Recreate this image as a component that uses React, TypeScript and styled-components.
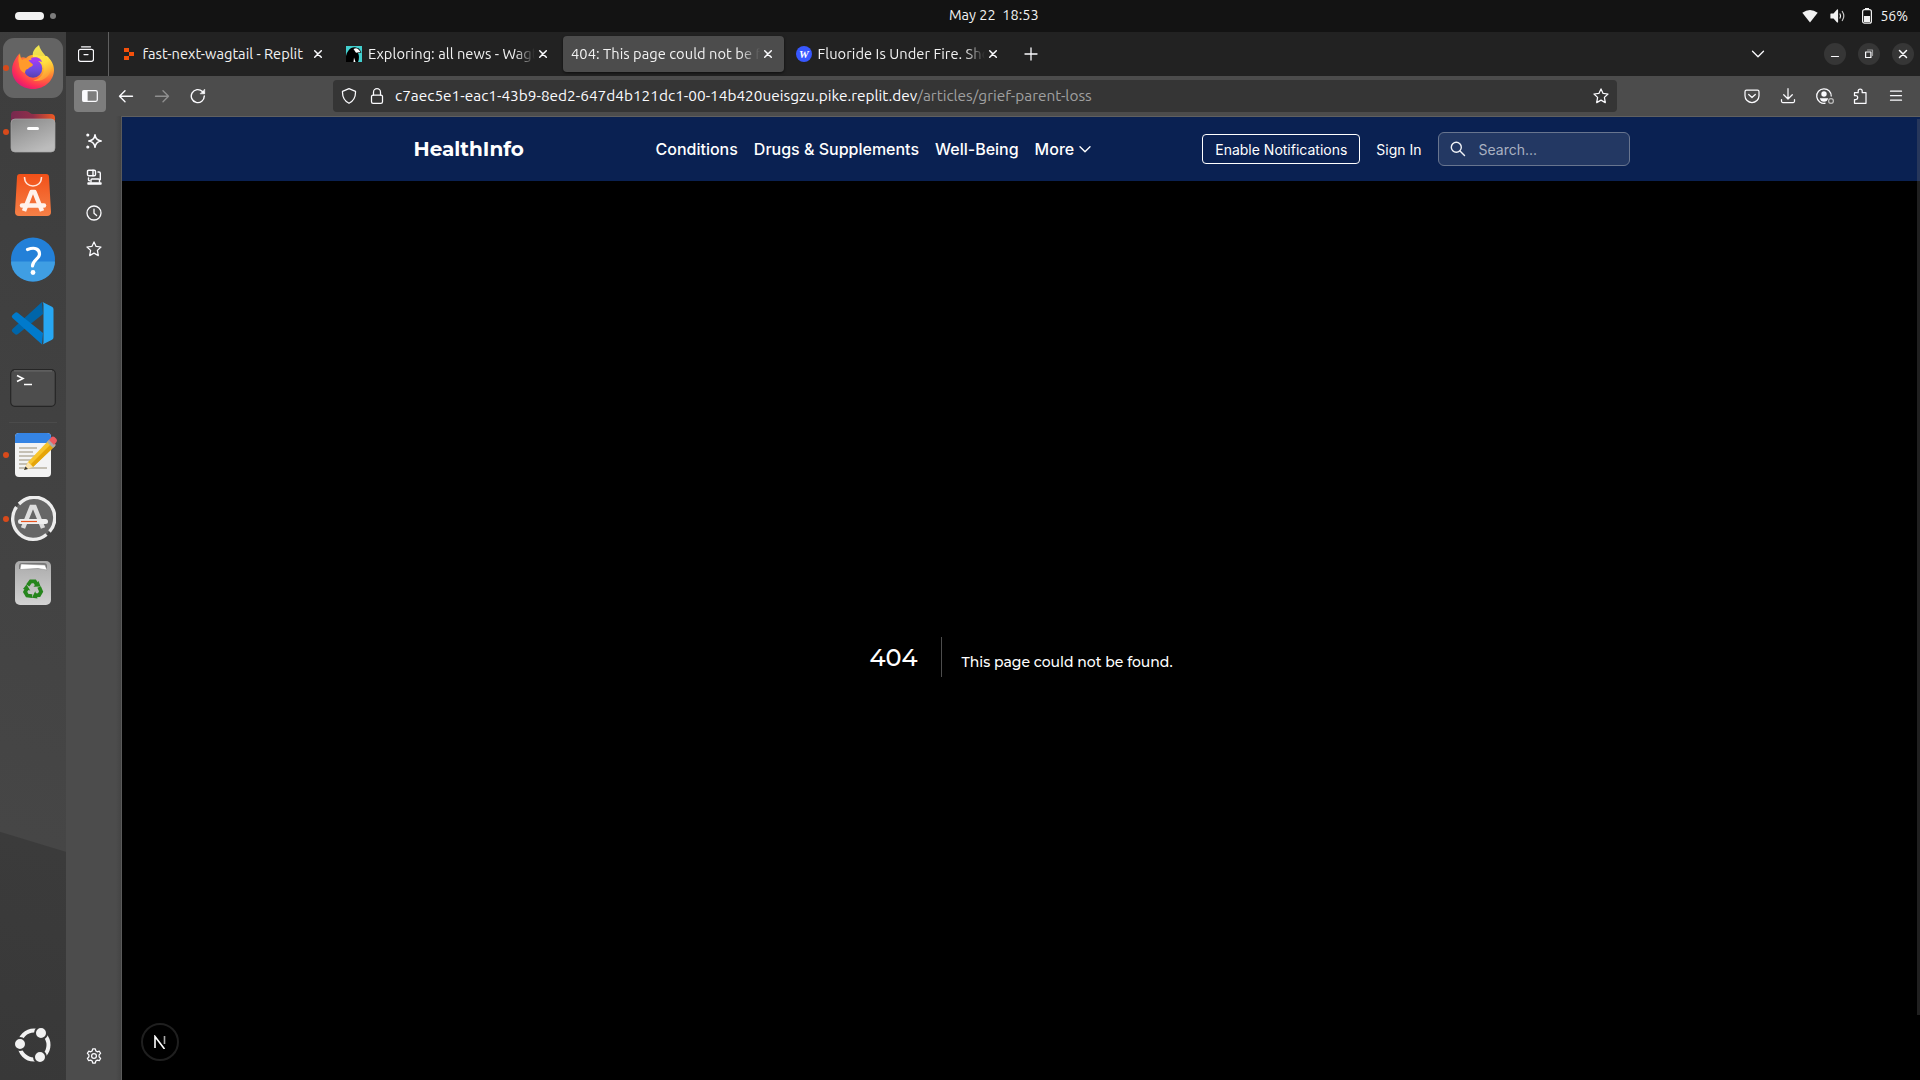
import React from "react";
import styled, { createGlobalStyle } from "styled-components";

const UI = `Ubuntu, "Noto Sans", "Open Sans", sans-serif`;
const INTER = `Inter, "Liberation Sans", sans-serif`;
const GEO = `Montserrat, Inter, sans-serif`;

const Global = createGlobalStyle`
  * { box-sizing: border-box; }
  html, body { margin: 0; padding: 0; background: #000; overflow: hidden; }
`;

const Desktop = styled.div`
  width: 1920px; height: 1080px; display: flex; flex-direction: column;
  font-family: ${UI}; color: #f2f2f2; overflow: hidden;
`;
const TopBar = styled.header`
  height: 32px; flex: none; background: #131313; display: grid;
  grid-template-columns: 949px 90px 1fr; align-items: center;
`;
const Workspaces = styled.div`
  display: flex; align-items: center; gap: 6px; padding-left: 15px;
`;
const Pill = styled.span`width: 29px; height: 8px; border-radius: 4px; background: #f2f2f2;`;
const Dot = styled.span`width: 6px; height: 6px; border-radius: 3px; background: #7d7d7d;`;
const Text = styled.span<{ $size?: number; $track?: number; $color?: string; $weight?: number }>`
  font-size: ${p => p.$size ?? 14.67}px; letter-spacing: ${p => p.$track ?? 0}px;
  color: ${p => p.$color ?? "#f2f2f2"}; font-weight: ${p => p.$weight ?? 400};
  white-space: pre; line-height: 20px;
`;
const Clock = styled(Text)`padding-bottom: 2px;`;
const Tray = styled.div`
  display: flex; align-items: center; justify-content: flex-end; padding-right: 12px;
`;
const TrayIcon = styled.span<{ $gap: number }>`display: flex; margin-right: ${p => p.$gap}px;`;

const Body = styled.div`flex: 1; display: flex; min-height: 0;`;
const Dock = styled.nav`
  width: 66px; flex: none; display: flex; flex-direction: column; justify-content: space-between;
  background: linear-gradient(16.9deg, #383838 0, #3b3b3b 237px, #464646 238px, #3e3e3e 900px, #3d3d3d 100%);
`;
const DockGroup = styled.div`display: flex; flex-direction: column;`;
const DockItem = styled.div<{ $active?: boolean }>`
  width: 60px; height: 60px; margin: 0 3px 4px; border-radius: 11px; position: relative;
  background: ${p => (p.$active ? "#646464" : "transparent")};
  display: flex; align-items: center; justify-content: center;
`;
const DockTop = styled(DockGroup)`padding-top: 6px;`;
const DockRule = styled.div`height: 1px; width: 48px; margin: 0 auto 2px; background: #4b4b4b;`;
const Running = styled.i`
  position: absolute; left: 0; top: 27px; width: 6px; height: 6px; border-radius: 3px; background: #d84a1b;
`;

const Browser = styled.main`flex: 1; display: flex; flex-direction: column; min-width: 0; background: #4c4c4c;`;
const TabStrip = styled.div`
  height: 44px; flex: none; background: #222; display: flex; align-items: center;
`;
const ViewButton = styled.div`
  width: 43px; height: 44px; border-right: 1px solid #606060; display: flex; align-items: center; padding-left: 12px;
`;
const Tab = styled.div<{ $selected?: boolean; $w: number; $pad: number }>`
  width: ${p => p.$w}px; height: 36px; border-radius: 4px; display: flex; align-items: center;
  padding: 0 8px 0 ${p => p.$pad}px; background: ${p => (p.$selected ? "#4c4c4c" : "transparent")};
  box-shadow: ${p => (p.$selected ? "0 1px 3px rgba(0,0,0,.6)" : "none")};
`;
const TabTitle = styled.div<{ $fade?: boolean; $left: number }>`
  flex: 1; min-width: 0; margin-left: ${p => p.$left}px; display: flex;
  mask-image: ${p => (p.$fade ? "linear-gradient(to left, transparent 0, #000 20px)" : "none")};
`;
const Tabs = styled.div`display: flex; padding-left: 7px; gap: 4px;`;
const NewTab = styled.div`display: flex; padding-left: 13.5px;`;
const WindowTools = styled.div`margin-left: auto; display: flex; align-items: center; padding-right: 6px;`;
const ListTabs = styled.span`display: flex; margin-right: 58px;`;
const WinButtons = styled.div`display: flex; gap: 12px;`;
const WinButton = styled.span`
  width: 22px; height: 22px; border-radius: 11px; background: #363636; display: flex; align-items: center; justify-content: center;
`;
const NavBar = styled.div`
  height: 40px; flex: none; display: flex; align-items: center; background: #4c4c4c; padding-left: 8px;
`;
const SideToggle = styled.span`
  width: 32px; height: 32px; border-radius: 4px; background: #7d7d7d; display: flex; align-items: center; justify-content: center;
`;
const NavButtons = styled.div`display: flex; gap: 20px; padding-left: 12px;`;
const UrlBar = styled.div`
  width: 1284px; height: 32px; margin-left: 127px; border-radius: 4px; background: #353535; display: flex; align-items: center; padding: 0 8px;
`;
const UrlIcons = styled.div`display: flex; gap: 12px; margin-right: 10px;`;
const UrlText = styled.div`flex: 1; display: flex;`;
const NavTools = styled.div`margin-left: auto; display: flex; gap: 20px; padding-right: 16px; align-items: center;`;
const Content = styled.div`flex: 1; display: flex; min-height: 0;`;
const Sidebar = styled.aside`
  width: 56px; flex: none; display: flex; flex-direction: column; justify-content: space-between; align-items: center;
  padding: 17px 0 16px; border-right: 1px solid #5a5a5a;
  background: linear-gradient(to left, #444 0, #4c4c4c 5px);
`;
const SideGroup = styled.div`display: flex; flex-direction: column; gap: 20px;`;
const Page = styled.section`
  flex: 1; background: #000; border-top: 1px solid #606060; display: flex; flex-direction: column; position: relative;
`;
const SiteHeader = styled.div`
  height: 64px; flex: none; background: #0a2152; display: flex; align-items: center; padding: 0 290px 0 291.5px;
`;
const Brand = styled.div`font: 700 20px/28px ${GEO}; color: #fff; width: 242px; white-space: nowrap;`;
const Menu = styled.div`display: flex; gap: 16px; font: 500 16px/24px ${INTER}; color: #fff; white-space: nowrap;`;
const MenuMore = styled.span`display: flex; align-items: center; gap: 3px;`;
const Actions = styled.div`margin-left: auto; display: flex; align-items: center; gap: 16px; font: 400 14px/20px ${INTER}; color: #fff;`;
const Enable = styled.button`
  width: 158px; height: 30px; padding: 1px 0 0; border: 1px solid #fff; border-radius: 4px; background: none; color: #fff;
  font: 400 14px/20px ${INTER}; white-space: nowrap;
`;
const SignIn = styled.span`padding-top: 1px; margin-right: .5px;`;
const Search = styled.div`
  width: 192px; height: 34px; border: 1px solid #68758f; border-radius: 6px; background: #233863; display: flex;
  align-items: center; padding: 0 0 0 11px; gap: 12.5px; color: #a9b1c1;
`;
const Placeholder = styled.span`padding-top: 1px;`;
const NotFound = styled.div`flex: 1; display: flex; justify-content: center; padding: 456px 0 0 0; color: #fff;`;
const Code = styled.h1`
  margin: 0 20px 0 0; padding: 0 23px 0 0; height: 40px; border-right: 1px solid #4d4d4d; font: 500 24px/41px ${GEO};
`;
const Message = styled.h2`margin: 0; font: 500 14px/50px ${GEO};`;
const NextBadge = styled.div`
  position: absolute; left: 19px; bottom: 19px; width: 38px; height: 38px; border-radius: 19px; border: 2px solid #1f1f1f;
  background: #000; display: flex; align-items: center; justify-content: center;
`;
const ScrollThumb = styled.div`
  position: absolute; right: 0; top: 2px; width: 3px; height: 896px; background: rgba(115,115,115,.28);
`;

const Line = ({ size = 16, color = "#fbfbfe", w = 1.25, children }: any) => (
  <svg width={size} height={size} viewBox="0 0 16 16" fill="none" stroke={color} strokeWidth={w} strokeLinecap="round" strokeLinejoin="round">{children}</svg>
);
const Close = () => <Line w={1.5}><path d="M4.7 4.7l6.6 6.6M11.3 4.7l-6.6 6.6" /></Line>;
const Star = () => <Line><path d="M8 .9l2.1 4.5 4.9.6-3.6 3.4.9 5.2L8 12.1l-4.3 2.5.9-5.2L1 6l4.900-.6z" /></Line>;

const Firefox = () => (
  <svg width="44" height="46" viewBox="0 0 44 46">
    <defs>
      <radialGradient id="ffa" cx=".8" cy=".15" r="1"><stop offset="0" stopColor="#fff44f" /><stop offset=".3" stopColor="#ffb52e" /><stop offset=".55" stopColor="#ff7139" /><stop offset=".8" stopColor="#ff2f55" /><stop offset="1" stopColor="#d9157c" /></radialGradient>
      <linearGradient id="ffb" x1="0" y1="0" x2="0" y2="1"><stop offset="0" stopColor="#a33bf7" /><stop offset=".6" stopColor="#6a4bdc" /><stop offset="1" stopColor="#553fae" /></linearGradient>
      <linearGradient id="ffc" x1=".5" y1="0" x2=".8" y2="1"><stop offset="0" stopColor="#fff44f" /><stop offset=".5" stopColor="#ffdc3e" /><stop offset="1" stopColor="#ff8a33" /></linearGradient>
    </defs>
    <path d="M8 9c0 2 0 3 1 4 2-1 4-1 6 0 4-4 9-4 14-2l7 0c4 4 7 8 7 14 0 10-9 19-21 19S1 35 1 25c0-5 2-9 4-12 1-2 2-3 3-4z" fill="url(#ffa)" />
    <path d="M28 0c-5 4-7 7-6 12 6 0 10 4 11 9 1 8-4 13-11 15 12 1 18-6 18-14 0-5-2-8-3-10v4C36 10 30 8 28 0z" fill="url(#ffc)" opacity=".9" />
    <circle cx="22" cy="23.500" r="9.300" fill="url(#ffb)" />
    <path d="M20 13c5-2 10 0 11 4-4-2-7-1-9 1z" fill="#a63bf0" />
    <path d="M9 8c0 3 1 5 2 7 3-2 6-1 8 2 1 1 3 2 3 3-1 2-4 2-5 4-2 0-3 2-3 4-4-1-6-5-6-9-1-4-1-8 1-11z" fill="#ff9a2b" />
  </svg>
);
const Files = () => (
  <svg width="46" height="44" viewBox="0 0 46 44">
    <defs><linearGradient id="fa"><stop offset="0" stopColor="#77294f" /><stop offset=".5" stopColor="#8f2f4a" /><stop offset="1" stopColor="#f05a22" /></linearGradient>
      <linearGradient id="fb" x2=".6" y2="1"><stop offset="0" stopColor="#868686" /><stop offset="1" stopColor="#bcbcbc" /></linearGradient></defs>
    <path d="M1 20V5q0-4 4-4h11q2 0 3.500 1.500T23 4h18q4 0 4 4v12z" fill="url(#fa)" />
    <rect x="1" y="9" width="44" height="33" rx="4" fill="url(#fb)" stroke="#a7a7a7" strokeWidth=".7" />
    <rect x="17" y="17" width="12" height="3" rx="1.5" fill="#fff" />
  </svg>
);
const AppCenter = () => (
  <svg width="36" height="44" viewBox="0 0 36 44">
    <defs><linearGradient id="ac" x2="0" y2="1"><stop offset="0" stopColor="#f25018" /><stop offset="1" stopColor="#f58047" /></linearGradient></defs>
    <path d="M5 0h26q3 0 3 3l2 35q0 4-4 4H4q-4 0-4-4L2 3q0-3 3-3z" fill="url(#ac)" />
    <path d="M9.500 3c0 6 4 9 8.500 9s8.500-3 8.500-9" fill="none" stroke="#ffe5da" strokeWidth="1.500" />
    <path d="M9 37l7.500-19h3L27 37" fill="none" stroke="#fff2ec" strokeWidth="4.500" strokeLinejoin="round" />
    <path d="M7 31.500h22" stroke="#fff2ec" strokeWidth="4.500" strokeLinecap="round" />
  </svg>
);
const Help = () => (
  <svg width="46" height="46" viewBox="0 0 46 46">
    <circle cx="23" cy="22.500" r="22" fill="#2380d8" /><path d="M1 24.500a22 20 0 0044 0z" fill="#3f9ee3" />
    <path d="M17.500 12.500c8-3 12 0 12 4.500 0 5-7 6-7 12" fill="none" stroke="#fff" strokeWidth="3.200" strokeLinecap="round" /><circle cx="23" cy="35.500" r="2.400" fill="#fff" />
  </svg>
);
const Code2 = () => (
  <svg width="44" height="44" viewBox="0 0 44 44">
    <path d="M31 0L1.500 27Q0 28.500 1.500 30L4.500 32.600Q6 33 7 32L32 12z" fill="#0065a9" />
    <path d="M31 42.500L1.500 16Q0 14.500 1.500 13L4.500 10.400Q6 10 7 11L32 31z" fill="#007acc" />
    <path d="M31.500 0l9.500 4.800q1.500.8 1.500 2.500v27.900q0 1.700-1.500 2.500l-9.500 4.800Q32.500 41.500 32.500 40V3q0-2-1-3z" fill="#27a7f3" />
  </svg>
);
const Terminal = () => (
  <svg width="46" height="38" viewBox="0 0 46 38">
    <rect x=".7" y=".7" width="44.600" height="36.600" rx="4" fill="#4d4d4d" stroke="#262626" strokeWidth="1.200" /><path d="M4 1.900h38" stroke="#707070" />
    <path d="M7 6.500l6 3-6 3M14 15.500h8" fill="none" stroke="#fff" strokeWidth="1.600" />
  </svg>
);
const Editor = () => (
  <svg width="46" height="46" viewBox="0 0 46 46" overflow="visible">
    <rect x="5" y="1" width="36" height="44" rx="4" fill="#f3f3f3" /><path d="M5 11V5q0-4 4-4h28q4 0 4 4v6z" fill="#3584e4" />
    <path d="M9 16h18M9 20h14M9 24h16M9 28h13M9 32h10M9 36h28" stroke="#c5c0b4" strokeWidth="1.800" />
    <g transform="translate(1 -1)">
      <path d="M17 31L38 9l6 6-22 21-9 3z" fill="#f8c52d" /><path d="M20 33l21-21 3 3-22 21z" fill="#e5a50a" />
      <path d="M17 31l5 5-9 3z" fill="#fbe3b0" /><path d="M14.500 35.500l2.500 2.500-4 1z" fill="#333" />
      <path d="M36 11l3-3 6 6-3 3z" fill="#aaa" /><path d="M38 9l2.500-3q1.500-1 3 0l2 2q1 1.500 0 3L43 14z" fill="#ed5b60" />
    </g>
  </svg>
);
const Updater = () => (
  <svg width="46" height="46" viewBox="0 0 46 46">
    <circle cx="23" cy="23" r="20.500" fill="#666" />
    <path d="M9 8A20.500 20.500 0 0 1 39.500 35.500M36.500 38.500A20.500 20.500 0 0 1 6.500 11" fill="none" stroke="#ededed" strokeWidth="3.400" />
    <path d="M13 32l8.500-21h3L33 32" fill="none" stroke="#ddd" strokeWidth="4.500" /><rect x="8" y="23" width="30" height="5" rx="2.500" fill="#eee" /><path d="M11 25.500h16" stroke="#e95420" strokeWidth="1.200" />
  </svg>
);
const Trash = () => (
  <svg width="38" height="46" viewBox="0 0 38 46">
    <defs><linearGradient id="tr" x2="0" y2="1"><stop offset="0" stopColor="#aaa" /><stop offset="1" stopColor="#d2d2d2" /></linearGradient></defs>
    <rect x="1" y="1" width="36" height="44" rx="5" fill="url(#tr)" /><path d="M5 9V6q0-3 3-3h22q3 0 3 3v3z" fill="#777" /><path d="M6 9l1-5 24 1 2 5-9-1.500-10 .5-7 .5z" fill="#fff" stroke="#888" strokeWidth=".5" />
    <g transform="translate(19 29.500) scale(1.150)" fill="none" stroke="#26851d" strokeWidth="3.300">
      {[0, 120, 240].map(a => <g key={a} transform={`rotate(${a})`}><path d="M-4.600-3.500L-2-7h3.600l2 3.200" /><path d="M.4-2.500l6.200-.2-1.800-4.600z" fill="#26851d" stroke="none" /></g>)}
    </g>
  </svg>
);
const Ubuntu = () => (
  <svg width="37" height="38" viewBox="0 0 37 38">
    <circle cx="19" cy="18" r="14.500" fill="none" stroke="#f2f2f2" strokeWidth="4" />
    {[[5, 17], [26, 6], [25, 30]].map(([x, y]) => <circle key={x} cx={x} cy={y} r="6" fill="#f2f2f2" stroke="#3a3a3a" strokeWidth="2" />)}
  </svg>
);

const TopTray = () => (
  <Tray>
    <TrayIcon $gap={12}><svg width="16" height="16" viewBox="0 0 16 16"><path d="M.3 4.800Q8-.7 15.700 4.800L8 14.600z" fill="#f2f2f2" /></svg></TrayIcon>
    <TrayIcon $gap={15}><Line color="#f2f2f2" w={1.2}><path d="M1 6h3l3.500-4v12L4 10H1z" fill="#f2f2f2" /><path d="M10 6q1.200 2 0 4" /><path d="M12.300 3.500q3 4.500 0 9" opacity=".8" /></Line></TrayIcon>
    <TrayIcon $gap={7}><svg width="12" height="16" viewBox="0 0 12 16"><path d="M4 1h4" stroke="#f2f2f2" strokeWidth="2" /><rect x="1.600" y="1.700" width="8.800" height="13.500" rx="2" fill="none" stroke="#f2f2f2" strokeWidth="1.200" /><path d="M3 8h6v6H3z" fill="#f2f2f2" /></svg></TrayIcon>
    <Text $size={14}>56%</Text>
  </Tray>
);

export default function App() {
  return (
    <Desktop>
      <Global />
      <TopBar>
        <Workspaces><Pill /><Dot /></Workspaces>
        <Clock $size={14.5}>May 22  18:53</Clock>
        <TopTray />
      </TopBar>
      <Body>
        <Dock>
          <DockTop>
            <DockItem $active><Running /><Firefox /></DockItem>
            <DockItem><Running /><Files /></DockItem>
            <DockItem><AppCenter /></DockItem>
            <DockItem><Help /></DockItem>
            <DockItem><Code2 /></DockItem>
            <DockItem><Terminal /></DockItem>
            <DockRule />
            <DockItem><Running /><Editor /></DockItem>
            <DockItem><Running /><Updater /></DockItem>
            <DockItem><Trash /></DockItem>
          </DockTop>
          <DockGroup><DockItem><Ubuntu /></DockItem></DockGroup>
        </Dock>
        <Browser>
          <TabStrip>
            <ViewButton><Line><path d="M3.500.8h9M2.500 3.300h11a2 2 0 012 2v8a2 2 0 01-2 2h-11a2 2 0 01-2-2v-8a2 2 0 012-2zM6 8.500h4" /></Line></ViewButton>
            <Tabs>
              <Tab $w={218} $pad={8}>
                <svg width="10" height="12" viewBox="0 0 10 12"><path d="M0 0h5v4H0zM5 4h5v4H5zM0 8h5v4H0z" fill="#f4500b" /></svg>
                <TabTitle $left={8.5}><Text>fast-next-wagtail - Replit</Text></TabTitle><Close />
              </Tab>
              <Tab $w={221} $pad={8}>
                <svg width="16" height="16" viewBox="0 0 16 16"><path d="M0 0h16v16H0z" fill="#43d0cf" /><path d="M0 16V10Q1 6 2.500 4.500 5 1 9 1.200l4 1.300 2.500 4-3.500.5q2 4 0 9z" fill="#000" /><path d="M7.500 3Q11 1 13 4l1.500 2-4.500.8zM8 11.500l1.500 4.500H7.500z" fill="#fff" /></svg>
                <TabTitle $left={6} $fade><Text $track={0.05}>Exploring: all news - Wagt</Text></TabTitle><Close />
              </Tab>
              <Tab $w={221} $pad={8} $selected><TabTitle $left={0} $fade><Text $track={0.05}>404: This page could not be f</Text></TabTitle><Close /></Tab>
              <Tab $w={221} $pad={8}>
                <svg width="16" height="16" viewBox="0 0 16 16"><circle cx="8" cy="8" r="8" fill="#3858ff" /><text x="8" y="12" textAnchor="middle" fontFamily="Liberation Serif" fontStyle="italic" fontWeight="700" fontSize="11" fill="#fff">W</text></svg>
                <TabTitle $left={5.5} $fade><Text $track={0.05}>Fluoride Is Under Fire. Sho</Text></TabTitle><Close />
              </Tab>
            </Tabs>
            <NewTab><Line w={1.3}><path d="M8 2v12M2 8h12" /></Line></NewTab>
            <WindowTools>
              <ListTabs><Line w={1.3}><path d="M2.500 5.300L8 10.800l5.500-5.500" /></Line></ListTabs>
              <WinButtons>
                <WinButton><Line w={1.2}><path d="M4.500 10.500h7" /></Line></WinButton>
                <WinButton><Line w={1.2}><path d="M4.600 6h5.300v5.500H4.600z" /><path d="M6.500 4h5v5.500" opacity=".5" /></Line></WinButton>
                <WinButton><Line w={1.5}><path d="M4.500 4.500l7 7m0-7l-7 7" /></Line></WinButton>
              </WinButtons>
            </WindowTools>
          </TabStrip>
          <NavBar>
            <SideToggle><Line><rect x=".7" y="2.700" width="14.600" height="10.600" rx="1.500" /><path d="M1 3h4v10H1z" fill="#fbfbfe" /></Line></SideToggle>
            <NavButtons>
              <Line w={1.4}><path d="M14.500 8.200H1.500M7 2.700L1.500 8.200 7 13.700" /></Line>
              <Line w={1.4} color="#8f8f8f"><path d="M1.500 8.200h13M9 2.700l5.500 5.500L9 13.700" /></Line>
              <Line w={1.4}><path d="M14.300 8A6.500 6.500 0 1 1 12.400 3.500L14 5" /><path d="M14.700 1.500v4.300h-4.300z" fill="#fbfbfe" strokeWidth=".6" /></Line>
            </NavButtons>
            <UrlBar>
              <UrlIcons>
                <Line><path d="M8 .7l6.500 2.600c.3 6-1.700 9.500-6.500 12C3.200 12.800 1.200 9.300 1.500 3.300z" /></Line>
                <Line><rect x="2.500" y="7" width="11" height="8.300" rx="1.600" /><path d="M4.500 7V4.200a3.500 3.500 0 017 0V7" /></Line>
              </UrlIcons>
              <UrlText>
                <Text $size={15.4} $color="#fbfbfe">c7aec5e1-eac1-43b9-8ed2-647d4b121dc1-00-14b420ueisgzu.pike.replit.dev</Text>
                <Text $size={15.4} $color="#a0a0a0">/articles/grief-parent-loss</Text>
              </UrlText>
              <Star />
            </UrlBar>
            <NavTools>
              <Line><path d="M2.500 2.200h11q1.500 0 1.500 1.500v4a7 6.800 0 01-14 0v-4q0-1.500 1.500-1.500zM4.700 6.500L8 9.500l3.300-3" /></Line>
              <Line><path d="M8 .7v10M3.700 6.700L8 11l4.300-4.300M1.500 11.500v1.800q0 1.200 1.200 1.200h10.600q1.200 0 1.200-1.200v-1.800" /></Line>
              <svg width="16" height="16" viewBox="0 0 16 16" overflow="visible" fill="none" stroke="#fbfbfe" strokeWidth="1.250"><path d="M9.500 15.200A7.300 7.300 0 1 1 15.300 8.500" /><circle cx="8" cy="6" r="2.700" fill="#fbfbfe" stroke="none" /><path d="M3.800 10.200h8.400q-1 3.500-4.200 3.500t-4.200-3.500z" fill="#fbfbfe" stroke="none" /><circle cx="15" cy="13" r="2.400" stroke="#bbb" /></svg>
              <Line><path d="M2.500 15.300H14V4.700h-3.800V3a2 2 0 00-4 0v1.700H2.500v3h1.300a1.800 1.800 0 010 3.800H2.500z" /></Line>
              <Line><path d="M2.500 3.200h11M2.500 7.700h11M2.500 12.200h11" /></Line>
            </NavTools>
          </NavBar>
          <Content>
            <Sidebar>
              <SideGroup>
                <Line w={1.3}><path d="M9 1.700Q9.600 7.300 15.300 8 9.600 8.700 9 14.300 8.400 8.700 2.700 8 8.400 7.300 9 1.700z" strokeWidth="1.500" /><circle cx="1.800" cy="2" r=".9" fill="#fbfbfe" /><circle cx="1.800" cy="14" r=".9" fill="#fbfbfe" /></Line>
                <Line w={1.4}><rect x="1.500" y="1.200" width="8" height="5.500" rx="1.200" /><path d="M7 1.200v5.500M12 3h1q1.300 0 1.300 1.300V10.500M2.500 9v2q0 .7 1 .7M5 13V11q0-1 1-1h6.500q1 0 1 1v2" /><path d="M2 13.900h13v1.200H2z" fill="#fbfbfe" /></Line>
                <Line w={1.3}><circle cx="8" cy="8" r="7" /><path d="M8 4.200v4l2.600 2.300" /></Line>
                <Star />
              </SideGroup>
              <Line><circle cx="8" cy="8" r="2.400" /><path d="M6.700.9h2.600l.5 2 1.500.9 2-.6 1.300 2.200-1.500 1.500v2l1.500 1.600-1.300 2.200-2-.6-1.500.9-.5 2H6.700l-.5-2-1.500-.9-2 .6-1.300-2.200 1.500-1.600v-2L1.400 5.400l1.300-2.200 2 .6 1.500-.9z" /></Line>
            </Sidebar>
            <Page>
              <SiteHeader>
                <Brand>HealthInfo</Brand>
                <Menu>
                  <span>Conditions</span><span>Drugs &amp; Supplements</span><span>Well-Being</span>
                  <MenuMore>More <Line size={16} w={1.4} color="#fff"><path d="M3 5.700l5 5 5-5" /></Line></MenuMore>
                </Menu>
                <Actions>
                  <Enable>Enable Notifications</Enable><SignIn>Sign In</SignIn>
                  <Search><Line size={16} color="#f0f2f6" w={1.4}><circle cx="6.300" cy="6.300" r="5" /><path d="M10 10l4.500 4.500" /></Line><Placeholder>Search...</Placeholder></Search>
                </Actions>
              </SiteHeader>
              <NotFound><Code>404</Code><Message>This page could not be found.</Message></NotFound>
              <NextBadge>
                <svg width="14" height="14" viewBox="0 0 14 14" fill="none" strokeWidth="1.600"><path d="M2 13V1.500L11.500 14" stroke="#fff" /><path d="M11.500 1v8" stroke="#aaa" /></svg>
              </NextBadge>
              <ScrollThumb />
            </Page>
          </Content>
        </Browser>
      </Body>
    </Desktop>
  );
}
